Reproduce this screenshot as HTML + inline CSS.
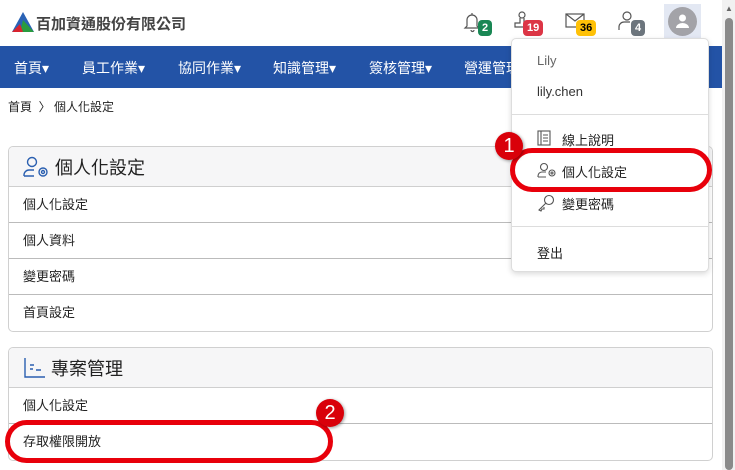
<!DOCTYPE html>
<html><head><meta charset="utf-8"><style>
*{box-sizing:border-box;margin:0;padding:0}
body{width:735px;height:470px;overflow:hidden;background:#fff;font-family:"Liberation Sans","Noto Sans CJK TC",sans-serif;color:#222;position:relative;font-size:13px}
.abs{position:absolute}
.nav{left:0;top:46px;width:722px;height:42px;background:#2353a6;color:#fff;font-size:14px}
.nav span{position:absolute;top:12px}
.card{left:8px;width:705px;border:1px solid #d0d0d0;border-radius:5px;background:#fff;overflow:hidden}
.ch{background:#f6f6f7;border-bottom:1px solid #cfcfcf;font-size:18px;padding-left:14px;display:flex;align-items:center;gap:4px;height:40px}
.row{height:36px;border-bottom:1px solid #bbb;padding:7px 0 0 14px;font-size:13px}
.row:last-child{border-bottom:none}
.badge{position:absolute;font-size:11px;font-weight:bold;border-radius:4px;padding:1px 4px;top:20px;line-height:14px}
.dd{left:511px;top:38px;width:198px;height:234px;background:#fff;border:1px solid #ddd;border-radius:5px;box-shadow:0 2px 6px rgba(0,0,0,.15)}
.dd div{position:absolute;left:25px;font-size:13px}
.dd svg{position:absolute;left:25px}
.oval{border:5px solid #e8000b;border-radius:30px}
.num{width:28px;height:28px;border-radius:50%;background:#d9000a;color:#fff;font-size:20px;text-align:center;line-height:28px;box-shadow:1px 1px 3px rgba(0,0,0,.4)}
</style></head><body>
<svg class="abs" style="left:12px;top:12px" width="22" height="20" viewBox="0 0 22 20"><polygon points="11,0 22,20 0,20" fill="#2a62b5"/><polygon points="11,8 22,20 8,20" fill="#2a9b3f"/><polygon points="0,20 8,12 11,20" fill="#d9232e"/></svg>
<div class="abs" style="left:36px;top:13px;font-size:15px;font-weight:bold;color:#444">百加資通股份有限公司</div>
<svg class="abs" style="left:463px;top:11px" width="18" height="22" viewBox="0 0 18 22" fill="none" stroke="#555" stroke-width="1.2"><path d="M4 15V9a5 5 0 0 1 10 0v6l2 2H2z M8 19a1.5 1.5 0 0 0 3 0 M9 2v2"/></svg>
<span class="badge" style="left:478px;background:#198754;color:#fff">2</span>
<svg class="abs" style="left:512px;top:10px" width="20" height="22" viewBox="0 0 20 22" fill="none" stroke="#555" stroke-width="1.2"><circle cx="10" cy="5" r="3"/><path d="M8 8v5H3v4h14v-4h-5V8"/></svg>
<span class="badge" style="left:523px;background:#dc3545;color:#fff">19</span>
<svg class="abs" style="left:565px;top:13px" width="20" height="16" viewBox="0 0 20 16" fill="none" stroke="#555" stroke-width="1.2"><rect x="1" y="1" width="18" height="13"/><path d="M1 1l9 7 9-7"/></svg>
<span class="badge" style="left:576px;background:#ffc107;color:#000">36</span>
<svg class="abs" style="left:617px;top:10px" width="20" height="22" viewBox="0 0 20 22" fill="none" stroke="#555" stroke-width="1.2"><circle cx="10" cy="6" r="4"/><path d="M2 20v-3a5 5 0 0 1 5-5h6"/></svg>
<span class="badge" style="left:631px;background:#6c757d;color:#fff">4</span>
<div class="abs" style="left:664px;top:4px;width:37px;height:36px;background:#e3e8f3"></div>
<div class="abs" style="left:668px;top:7px;width:29px;height:29px;border-radius:50%;background:#a3a3a8"></div>
<svg class="abs" style="left:675px;top:14px" width="15" height="14" viewBox="0 0 15 14" fill="#fff"><circle cx="7.5" cy="4" r="3.5"/><path d="M1 14a6.5 5 0 0 1 13 0z"/></svg>
<div class="abs" style="left:722px;top:0;width:13px;height:470px;background:#f1f1f1"></div>
<div class="abs" style="left:725px;top:18px;width:8px;height:452px;background:#8a8a8a;border-radius:4px"></div>
<div class="abs" style="left:725px;top:4px;font-size:8px;color:#666">▲</div>
<div class="abs nav"><span style="left:14px">首頁▾</span><span style="left:82px">員工作業▾</span><span style="left:178px">協同作業▾</span><span style="left:273px">知識管理▾</span><span style="left:369px">簽核管理▾</span><span style="left:464px">營運管理</span></div>
<div class="abs" style="left:8px;top:98px;font-size:12px">首頁 &nbsp;〉 個人化設定</div>
<div class="abs card" style="top:146px">
<div class="ch"><svg width="28" height="22" viewBox="0 0 28 22" fill="none" stroke="#2a5fb0" stroke-width="1.4"><circle cx="9" cy="6" r="4.5"/><path d="M1 20v-1a5 5 0 0 1 5-5h5M1 20h10"/><circle cx="20" cy="16" r="4"/><circle cx="20" cy="16" r="1.5"/></svg>個人化設定</div>
<div class="row">個人化設定</div><div class="row">個人資料</div><div class="row">變更密碼</div><div class="row">首頁設定</div></div>
<div class="abs card" style="top:347px;height:114px">
<div class="ch"><svg width="24" height="22" viewBox="0 0 24 22" fill="none" stroke="#2a5fb0" stroke-width="1.4"><path d="M2 1v19h20"/><path d="M7 8h4M7 12h3M13 13h5"/></svg>專案管理</div>
<div class="row">個人化設定</div><div class="row">存取權限開放</div></div>
<div class="abs dd">
<div style="top:14px;color:#666">Lily</div>
<div style="top:45px;color:#333">lily.chen</div>
<div style="left:0;top:75px;width:196px;border-top:1px solid #ddd"></div>
<svg style="top:91px" width="14" height="16" viewBox="0 0 14 16" fill="none" stroke="#555" stroke-width="1.1"><rect x="1" y="1" width="12" height="14"/><path d="M4 1v14M6 5h5M6 8h5M6 11h5"/></svg>
<div style="left:50px;top:91px">線上說明</div>
<svg style="top:123px" width="20" height="16" viewBox="0 0 20 16" fill="none" stroke="#555" stroke-width="1.1"><circle cx="7" cy="5" r="3.5"/><path d="M1 15v-1a4 4 0 0 1 4-4h4M1 15h8"/><circle cx="15" cy="11" r="3"/><circle cx="15" cy="11" r="1"/></svg>
<div style="left:50px;top:123px">個人化設定</div>
<svg style="top:155px" width="18" height="18" viewBox="0 0 18 18" fill="none" stroke="#555" stroke-width="1.1"><circle cx="12" cy="6" r="4.5"/><path d="M9 9l-7 7 2 1 1-2 2 0 0-2"/></svg>
<div style="left:50px;top:155px">變更密碼</div>
<div style="left:0;top:187px;width:196px;border-top:1px solid #ddd"></div>
<div style="top:204px">登出</div>
</div>
<div class="abs oval" style="left:510px;top:148px;width:202px;height:44px"></div>
<div class="abs num" style="left:495px;top:132px">1</div>
<div class="abs oval" style="left:5px;top:420px;width:328px;height:43px"></div>
<div class="abs num" style="left:316px;top:399px">2</div>
</body></html>
